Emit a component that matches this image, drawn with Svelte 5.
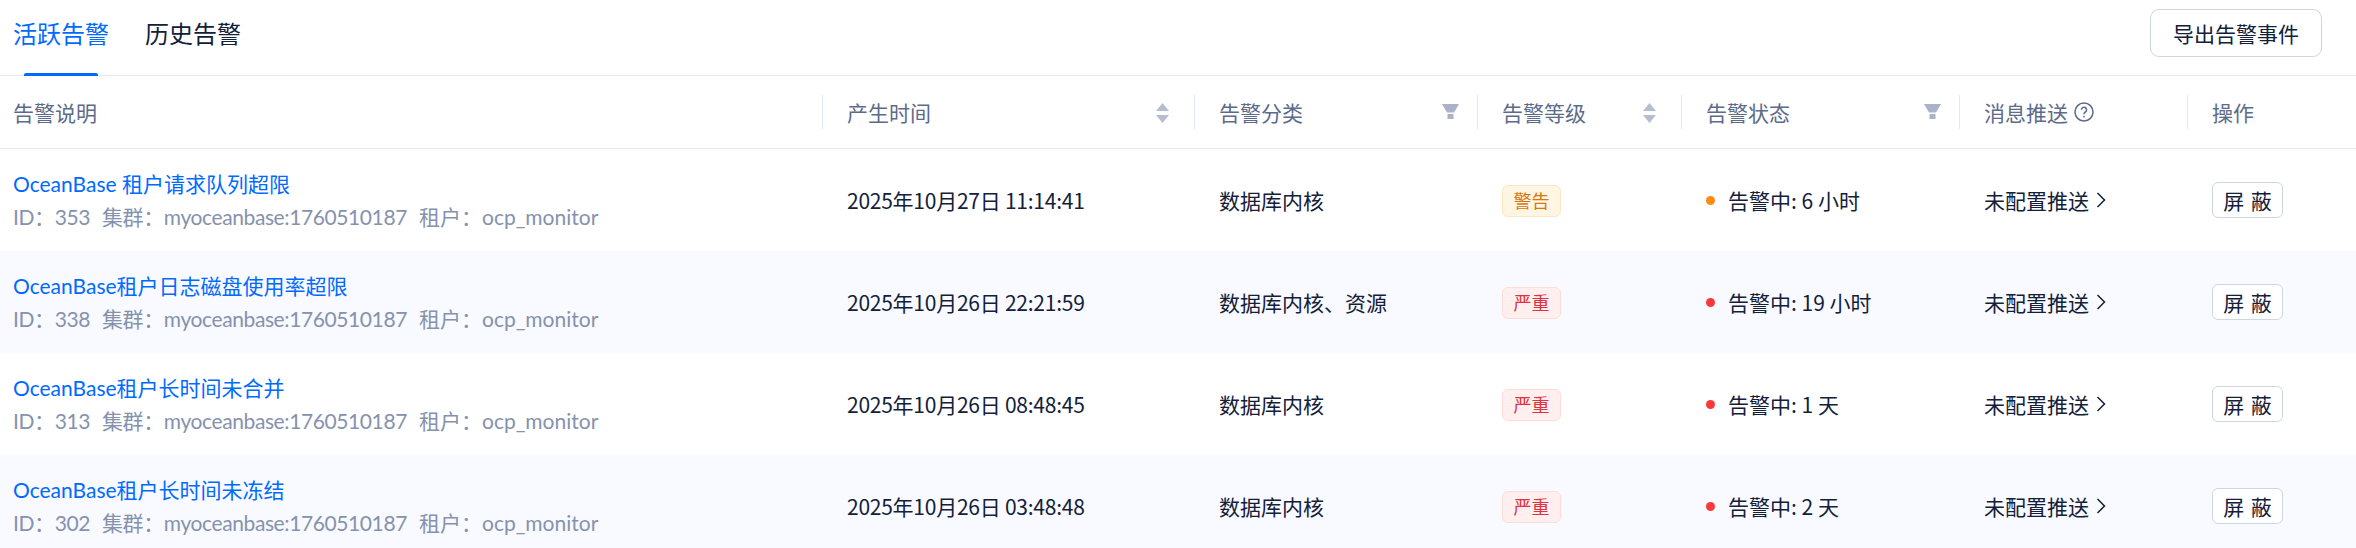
<script>
  const columns = [
    { title: '告警说明' },
    { title: '产生时间', sort: true },
    { title: '告警分类', filter: true },
    { title: '告警等级', sort: true },
    { title: '告警状态', filter: true },
    { title: '消息推送', help: true },
    { title: '操作' }
  ];

  const rows = [
    { name: 'OceanBase 租户请求队列超限', id: 353, time: '2025年10月27日 11:14:41', type: '数据库内核', level: 'warn', age: '6 小时' },
    { name: 'OceanBase租户日志磁盘使用率超限', id: 338, time: '2025年10月26日 22:21:59', type: '数据库内核、资源', level: 'crit', age: '19 小时' },
    { name: 'OceanBase租户长时间未合并', id: 313, time: '2025年10月26日 08:48:45', type: '数据库内核', level: 'crit', age: '1 天' },
    { name: 'OceanBase租户长时间未冻结', id: 302, time: '2025年10月26日 03:48:48', type: '数据库内核', level: 'crit', age: '2 天' }
  ];
</script>

<div class="page">
  <div class="tabs">
    <div class="tab active">活跃告警</div>
    <div class="tab">历史告警</div>
    <button class="export">导出告警事件</button>
  </div>

  <div class="row head">
    {#each columns as col, i}
      <div class="th" class:sep={i > 0}>
        <span>{col.title}</span>
        {#if col.help}
          <svg class="help" width="20" height="20" viewBox="0 0 20 20" fill="none" stroke="#5c6b8a" stroke-width="1.5">
            <circle cx="10" cy="10" r="9" />
            <path d="M7.400 7.800a2.600 2.600 0 1 1 4 2.200c-.9.600-1.400 1-1.400 2.200" />
            <path d="M10 13.800v1.700" />
          </svg>
        {/if}
        {#if col.sort}
          <svg class="tool" width="13" height="20" viewBox="0 0 13 20" fill="#b6bdd0">
            <path d="M6.500 0l6.500 8H0z" />
            <path d="M6.500 20L0 12h13z" />
          </svg>
        {/if}
        {#if col.filter}
          <svg class="tool funnel" width="17" height="15" viewBox="0 0 17 15" fill="#abb2c7">
            <path d="M0 0h17l-5 8.500H5z" />
            <path d="M5.500 10h6v5h-6z" />
          </svg>
        {/if}
      </div>
    {/each}
  </div>

  {#each rows as r, i}
    <div class="row body" class:alt={i % 2 === 1}>
      <div class="td desc">
        <a href="#top">{r.name}</a>
        <div class="meta">
          <span>ID：{r.id}</span>
          <span>集群：myoceanbase:1760510187</span>
          <span class="tenant">租户：ocp_monitor</span>
        </div>
      </div>
      <div class="td time">{r.time}</div>
      <div class="td">{r.type}</div>
      <div class="td"><span class="tag {r.level}">{r.level === 'warn' ? '警告' : '严重'}</span></div>
      <div class="td status"><i class="dot {r.level}"></i>告警中: {r.age}</div>
      <div class="td push">
        未配置推送
        <svg width="10" height="16" viewBox="0 0 10 16" fill="none" stroke="#132039" stroke-width="1.500">
          <path d="M1.500 1l7 7-7 7" />
        </svg>
      </div>
      <div class="td"><button class="mute">屏 蔽</button></div>
    </div>
  {/each}
</div>

<style>
  :global(body) {
    margin: 0;
    background: #fff;
    overflow: hidden;
  }

  .page {
    font-family: "Noto Sans CJK SC", "Noto Sans", sans-serif;
    font-size: 21px;
    color: #132039;
    height: 548px;
    overflow: hidden;
  }

  .tabs {
    display: flex;
    align-items: flex-start;
    height: 75px;
    padding: 0 34px 0 13px;
    border-bottom: 1px solid #e2e8f3;
    gap: 36px;
  }

  .tab {
    height: 75px;
    line-height: 65px;
    font-size: 24px;
    position: relative;
  }

  .tab.active {
    color: #006aff;
  }

  .tab.active::after {
    content: '';
    position: absolute;
    left: 11px;
    right: 11px;
    bottom: -1px;
    height: 3px;
    background: #006aff;
    border-radius: 2px 2px 0 0;
  }

  .export {
    margin: 9px 0 0 auto;
    width: 172px;
    height: 48px;
    border: 1.5px solid #cdd5e4;
    border-radius: 9px;
    background: #fff;
    color: #132039;
    font: inherit;
    padding: 0;
  }

  .row {
    display: grid;
    grid-template-columns: 822px 372px 283px 204px 278px 228px 169px;
    align-items: center;
  }

  .head {
    height: 72px;
    border-bottom: 1px solid #e2e8f3;
    color: #5c6b8a;
  }

  .th {
    display: flex;
    align-items: center;
    height: 34px;
    padding: 0 24px;
    gap: 6px;
  }

  .th:first-child {
    padding-left: 13px;
  }

  .th.sep {
    border-left: 1.5px solid #e2e8f3;
  }

  .tool {
    margin-left: auto;
    margin-right: 1px;
    margin-top: 1px;
  }

  .funnel {
    margin-right: -6px;
    margin-top: -1px;
  }

  .body {
    height: 102px;
  }

  .body.alt {
    background: #f8faff;
  }

  .td {
    padding-left: 25px;
    white-space: nowrap;
  }

  .td.desc {
    padding-left: 13px;
  }

  .time {
    letter-spacing: -0.25px;
  }

  .desc a {
    display: block;
    font-family: Lato, "Noto Sans CJK SC", sans-serif;
    color: #006aff;
    text-decoration: none;
    line-height: 34px;
  }

  .meta {
    display: flex;
    gap: 12px;
    font-family: Lato, "Noto Sans CJK SC", sans-serif;
    letter-spacing: -0.4px;
    color: #8592ad;
    line-height: 32px;
  }

  .tenant {
    letter-spacing: 0;
  }

  .tag {
    display: inline-block;
    height: 32px;
    line-height: 29px;
    width: 59px;
    text-align: center;
    box-sizing: border-box;
    font-size: 18px;
    border: 1.5px solid;
    border-radius: 6px;
    vertical-align: middle;
  }

  .tag.warn {
    color: #d9760f;
    background: #fff5e3;
    border-color: #fbe6c4;
  }

  .tag.crit {
    color: #e0323c;
    background: #fff0ef;
    border-color: #ffdcd8;
  }

  .status {
    display: flex;
    align-items: center;
  }

  .dot {
    width: 9px;
    height: 9px;
    border-radius: 50%;
    margin-right: 13px;
    margin-top: 1px;
  }

  .dot.warn {
    background: #ff8a0f;
  }

  .dot.crit {
    background: #f93939;
  }

  .push {
    display: flex;
    align-items: center;
    gap: 7px;
  }

  .mute {
    width: 71px;
    height: 36px;
    border: 1.5px solid #cdd5e4;
    border-radius: 6px;
    background: #fff;
    color: #132039;
    font: inherit;
    word-spacing: 2px;
    padding: 0;
    display: block;
  }
</style>
